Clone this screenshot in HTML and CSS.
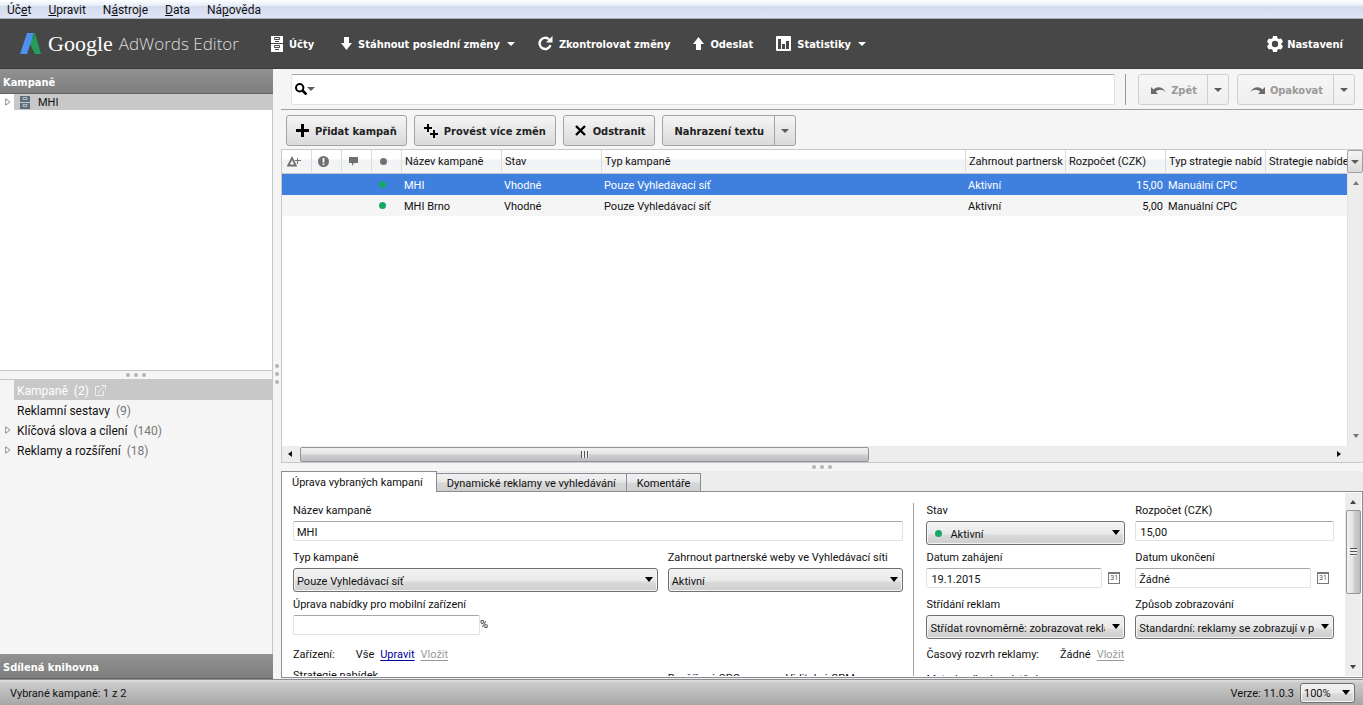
FILE: index.html
```html
<!DOCTYPE html>
<html lang="cs">
<head>
<meta charset="utf-8">
<title>Google AdWords Editor</title>
<link rel="stylesheet" href="styles.css">
</head>
<body>
<div class="app">
  <nav class="menubar">
    <button>Úč<u>e</u>t</button>
    <button><u>U</u>pravit</button>
    <button>N<u>á</u>stroje</button>
    <button><u>D</u>ata</button>
    <button>Ná<u>p</u>ověda</button>
  </nav>

  <header class="toolbar">
    <div class="brand">
      <svg class="brand-mark" width="22" height="22" viewBox="0 0 22 22"><path d="M9 2l6-2 6 21h-6L9 9z" fill="#259c5c"/><path d="M7 0h7L7 21H0z" fill="#4f8ff0"/><path d="M12.500 4.500L14 0l1 .5-1.500 7z" fill="#1f7f4c"/></svg>
      <span class="brand-google">Google</span>
      <span class="brand-product">AdWords Editor</span>
    </div>
    <button class="tool tool-accounts">
      <svg width="12" height="16" viewBox="0 0 12 16"><path fill="#fff" d="M0 0h12v7H0zM0 8h12v8H0z"/><path fill="none" stroke="#474747" d="M3.500 1.500h5v2h-5zM3.500 9.500h5v2h-5z"/><path fill="#474747" d="M4 5h4v1H4zM4 13h4v1H4z"/></svg>
      <span>Účty</span>
    </button>
    <button class="tool tool-download">
      <svg width="11" height="13" viewBox="0 0 11 13"><path fill="#fff" d="M3 0h5v6h3l-5.500 7L0 6h3z"/></svg>
      <span>Stáhnout poslední změny</span><i class="caret"></i>
    </button>
    <button class="tool tool-check">
      <svg width="15" height="15" viewBox="0 0 15 15"><path fill="none" stroke="#fff" stroke-width="2.400" d="M12.500 9.200A5.600 5.600 0 1 1 11 3.300"/><path fill="#fff" d="M14.500 0v6.500H8z"/></svg>
      <span>Zkontrolovat změny</span>
    </button>
    <button class="tool tool-send">
      <svg width="11" height="13" viewBox="0 0 11 13"><path fill="#fff" d="M3 13h5V7h3L5.500 0 0 7h3z"/></svg>
      <span>Odeslat</span>
    </button>
    <button class="tool tool-stats">
      <svg width="15" height="15" viewBox="0 0 15 15"><rect width="15" height="15" rx="1" fill="#fff"/><path fill="#474747" d="M2 3h3v10H2zM6 8h3v5H6zM10 5h3v8h-3z"/></svg>
      <span>Statistiky</span><i class="caret"></i>
    </button>
    <button class="tool tool-settings">
      <svg width="16" height="16" viewBox="0 0 16 16"><path fill="#fff" fill-rule="evenodd" d="M6 0h4l.5 2.300 1.300.8L14.200 2.400l1.800 3.300-1.600 1.500v1.600L16 10.300l-1.800 3.300-2.400-.7-1.300.8L10 16H6l-.5-2.300-1.300-.8-2.400.7L0 10.300l1.600-1.500V7.200L0 5.700l1.800-3.300 2.400.7 1.300-.8zM8 4.800a3.200 3.200 0 1 0 0 6.400 3.200 3.200 0 0 0 0-6.400z"/></svg>
      <span>Nastavení</span>
    </button>
  </header>

  <div class="workspace">
    <aside class="sidebar">
      <h2 class="side-title">Kampaně</h2>
      <div class="account-tree">
        <div class="tree-row">
          <svg class="twisty" width="6" height="8" viewBox="0 0 6 8"><path d="M.7.8L5 4 .7 7.200z" fill="#fff" stroke="#8c8c8c"/></svg>
          <div class="tree-item">
            <svg width="10" height="13" viewBox="0 0 10 13"><path fill="#5d6d7c" d="M0 0h10v6H0zM0 7h10v6H0z"/><path fill="none" stroke="#b4bdc6" d="M3 1.500h4v2H3zM3 8.500h4v2H3z"/></svg>
            <span>MHI</span>
          </div>
        </div>
      </div>
      <div class="splitter splitter-h"><i></i><i></i><i></i></div>
      <ul class="types">
        <li class="type is-active"><span class="twisty"></span><a>Kampaně <span class="count">(2)</span>
          <svg width="11" height="11" viewBox="0 0 11 11"><path fill="none" stroke="#eee" d="M5 1.500H.5v9h8V6M3 8l6.500-7M6.500.5h4v4"/></svg></a></li>
        <li class="type"><span class="twisty"></span><a>Reklamní sestavy <span class="count">(9)</span></a></li>
        <li class="type"><svg class="twisty" width="6" height="8" viewBox="0 0 6 8"><path d="M.7.8L5 4 .7 7.200z" fill="#fff" stroke="#8c8c8c"/></svg><a>Klíčová slova a cílení <span class="count">(140)</span></a></li>
        <li class="type"><svg class="twisty" width="6" height="8" viewBox="0 0 6 8"><path d="M.7.8L5 4 .7 7.200z" fill="#fff" stroke="#8c8c8c"/></svg><a>Reklamy a rozšíření <span class="count">(18)</span></a></li>
      </ul>
      <h2 class="side-title">Sdílená knihovna</h2>
    </aside>

    <div class="splitter splitter-v"><i></i><i></i><i></i></div>

    <main class="content">
      <div class="search-row">
        <div class="search">
          <button class="search-mode" aria-label="Možnosti hledání">
            <svg width="12" height="12" viewBox="0 0 12 12"><circle cx="4.700" cy="4.700" r="3.700" fill="none" stroke="#000" stroke-width="2"/><path d="M7.500 7.500l4 4" stroke="#000" stroke-width="2.600"/></svg>
            <i class="caret caret-grey"></i>
          </button>
          <input type="text" aria-label="Hledat">
        </div>
        <div class="history">
          <div class="split is-disabled">
            <button class="split-main"><svg width="15" height="8" viewBox="0 0 15 8"><path fill="#6a6a6a" d="M0 1v7h7L4.800 5.800C7.500 3.300 11 3 15 6.200 11.500 1 6.500-.2 2.500 3.500z"/></svg><span>Zpět</span></button><button class="split-arrow" aria-label="Historie zpět"><i class="caret caret-grey"></i></button>
          </div>
          <div class="split is-disabled">
            <button class="split-main"><svg width="15" height="8" viewBox="0 0 15 8"><path fill="#6a6a6a" d="M15 1v7H8l2.200-2.200C7.500 3.300 4 3 0 6.200 3.500 1 8.500-.2 12.500 3.500z"/></svg><span>Opakovat</span></button><button class="split-arrow" aria-label="Historie opakování"><i class="caret caret-grey"></i></button>
          </div>
        </div>
      </div>

      <div class="actions">
        <button class="btn"><svg width="13" height="13" viewBox="0 0 13 13"><path d="M6.500 0v13M0 6.500h13" stroke="#000" stroke-width="3"/></svg><span>Přidat kampaň</span></button>
        <button class="btn"><svg width="14" height="14" viewBox="0 0 14 14"><path d="M4 0v8M0 4h8M10 6v8M6 10h8" stroke="#000" stroke-width="2"/></svg><span>Provést více změn</span></button>
        <button class="btn btn-remove"><svg width="11" height="11" viewBox="0 0 11 11"><path d="M1 1l9 9M10 1l-9 9" stroke="#000" stroke-width="2.400"/></svg><span>Odstranit</span></button>
        <div class="split">
          <button class="split-main"><span>Nahrazení textu</span></button><button class="split-arrow" aria-label="Další náhrady"><i class="caret caret-grey"></i></button>
        </div>
      </div>

      <section class="grid-panel">
        <div class="grid-view">
          <table class="campaigns">
            <colgroup><col class="c-icon"><col class="c-icon"><col class="c-icon"><col class="c-icon"><col class="c-std"><col class="c-std"><col><col class="c-std"><col class="c-std"><col class="c-std"><col class="c-last"></colgroup>
            <thead>
              <tr>
                <th class="icon"><svg width="14" height="11" viewBox="0 0 14 11"><path fill="none" stroke="#707070" stroke-width="1.800" d="M1.200 9.500L5 2l3.800 7.500z"/><path stroke="#707070" d="M10.500 2v6M8 4.500h6"/></svg></th>
                <th class="icon"><svg width="11" height="11" viewBox="0 0 11 11"><circle cx="5.500" cy="5.500" r="5.500" fill="#707070"/><path stroke="#fff" stroke-width="1.800" d="M5.500 2v4.500M5.500 7.500v1.600"/></svg></th>
                <th class="icon"><svg width="9" height="9" viewBox="0 0 9 9"><path fill="#707070" d="M0 0h9v6H5L3 9V6H0z"/></svg></th>
                <th class="icon"><svg width="7" height="7" viewBox="0 0 7 7"><circle cx="3.500" cy="3.500" r="3.500" fill="#707070"/></svg></th>
                <th>Název kampaně</th><th>Stav</th><th>Typ kampaně</th><th>Zahrnout partnersk</th><th>Rozpočet (CZK)</th><th>Typ strategie nabíd</th><th>Strategie nabíde</th>
              </tr>
            </thead>
            <tbody>
              <tr class="is-selected"><td></td><td></td><td></td><td class="icon"><i class="dot"></i></td><td>MHI</td><td>Vhodné</td><td>Pouze Vyhledávací síť</td><td>Aktivní</td><td class="num">15,00</td><td>Manuální CPC</td><td></td></tr>
              <tr><td></td><td></td><td></td><td class="icon"><i class="dot"></i></td><td>MHI Brno</td><td>Vhodné</td><td>Pouze Vyhledávací síť</td><td>Aktivní</td><td class="num">5,00</td><td>Manuální CPC</td><td></td></tr>
            </tbody>
          </table>
        </div>
        <div class="grid-side">
          <button class="columns-btn" aria-label="Sloupce"><i class="caret caret-grey"></i></button>
          <div class="vscroll vscroll-idle"><i class="tri tri-up"></i><i class="tri tri-down"></i></div>
        </div>
        <div class="hscroll">
          <i class="tri tri-left"></i>
          <div class="h-track"><div class="h-thumb"><i class="grip"></i></div></div>
          <i class="tri tri-right"></i>
        </div>
      </section>

      <div class="splitter splitter-h"><i></i><i></i><i></i></div>

      <section class="editor">
        <div class="tabs" role="tablist">
          <button class="tab is-current" role="tab">Úprava vybraných kampaní</button>
          <button class="tab" role="tab">Dynamické reklamy ve vyhledávání</button>
          <button class="tab" role="tab">Komentáře</button>
        </div>
        <div class="pane">
          <form class="form">
            <div class="form-left">
              <div class="field span-2"><label for="name">Název kampaně</label><input id="name" type="text" value="MHI"></div>
              <div class="field"><label for="type">Typ kampaně</label><div class="select"><select id="type"><option>Pouze Vyhledávací síť</option></select></div></div>
              <div class="field"><label for="partners">Zahrnout partnerské weby ve Vyhledávací síti</label><div class="select"><select id="partners"><option>Aktivní</option></select></div></div>
              <div class="field"><label for="mobile">Úprava nabídky pro mobilní zařízení</label><div class="with-unit"><input id="mobile" type="text"><span>%</span></div></div>
              <div class="field"></div>
              <div class="inline span-2"><span class="inline-label">Zařízení:</span><span>Vše</span><a class="link" href="#">Upravit</a><a class="link link-off">Vložit</a></div>
              <div class="next-label">Strategie nabídek</div>
              <div class="next-pair"><span>Rozšířené CPC</span><span>Viditelné CPM</span></div>
            </div>
            <div class="form-right">
              <div class="field"><label for="state">Stav</label><div class="select select-dot"><select id="state"><option>Aktivní</option></select></div></div>
              <div class="field"><label for="budget">Rozpočet (CZK)</label><input id="budget" class="roomy" type="text" value="15,00"></div>
              <div class="field"><label for="start">Datum zahájení</label><div class="with-cal"><input id="start" class="roomy" type="text" value="19.1.2015"><button type="button" class="cal" aria-label="Kalendář">31</button></div></div>
              <div class="field"><label for="end">Datum ukončení</label><div class="with-cal"><input id="end" type="text" value="Žádné"><button type="button" class="cal" aria-label="Kalendář">31</button></div></div>
              <div class="field"><label for="rotation">Střídání reklam</label><div class="select"><select id="rotation"><option>Střídat rovnoměrně: zobrazovat reklamy rovnoměrněji</option></select></div></div>
              <div class="field"><label for="delivery">Způsob zobrazování</label><div class="select"><select id="delivery"><option>Standardní: reklamy se zobrazují v průběhu dne</option></select></div></div>
              <div class="inline span-2"><span class="inline-label">Časový rozvrh reklamy:</span><span>Žádné</span><a class="link link-off">Vložit</a></div>
              <div class="next-pair next-right span-2"><span>Metoda cílení umístění</span></div>
            </div>
          </form>
          <div class="vscroll vscroll-form"><i class="tri tri-up"></i><div class="v-thumb"><i class="grip"></i></div><i class="tri tri-down"></i></div>
        </div>
      </section>
    </main>
  </div>

  <footer class="status">
    <span class="status-text">Vybrané kampaně: 1 z 2</span>
    <label class="status-text version" for="zoom">Verze: 11.0.3</label>
    <div class="select select-zoom"><select id="zoom"><option>100%</option></select></div>
  </footer>
</div>
</body>
</html>
```
FILE: styles.css
```css
* { box-sizing: border-box; }
html, body { height: 100%; }
body { margin: 0; overflow: hidden; background: #f5f5f5; color: #111; font: 11px/14px Roboto, "Noto Sans", sans-serif; }
button, input, select { font: inherit; color: inherit; margin: 0; }
button { background: none; border: 0; padding: 0; white-space: nowrap; }
svg { display: block; flex: none; }
h2, ul { margin: 0; padding: 0; list-style: none; }

.app { display: flex; flex-direction: column; height: 100vh; }

/* menu */
.menubar { display: flex; gap: 17px; height: 19px; flex: none; padding: 1px 7px 0; font-size: 12px; border-bottom: 1px solid #a9adbb; background: linear-gradient(#fdfeff 0, #e6edf6 6px, #d4dbed 6px, #dfe5f6 18px); }
.menubar u { text-underline-offset: 1px; }

/* main toolbar */
.toolbar { display: flex; align-items: center; height: 50px; flex: none; padding: 0 20px; background: #474747; color: #fff; border-bottom: 1px solid #3c3c3c; font-family: "DejaVu Sans Condensed", "Noto Sans", sans-serif; font-weight: 700; }
.brand { display: flex; align-items: center; width: 251px; font-weight: 400; }
.brand-google { margin-left: 6px; font: 22px/30px "Liberation Serif", serif; }
.brand-product { margin-left: 6px; font: 300 17px/30px "Open Sans", sans-serif; color: #ddd; white-space: nowrap; }
.tool { display: flex; align-items: center; gap: 6px; margin-right: 23px; }
.tool span, .btn span, .split-main span { padding-top: 2px; }
.tool .caret { margin-left: 1px; }
.tool-accounts { margin-right: 27px; }
.tool-settings { margin: 0 0 0 auto; gap: 4px; }
.caret { border: 4px solid transparent; border-top-color: currentColor; border-bottom: 0; flex: none; }
.caret-grey { color: #5c5c5c; }

.workspace { display: flex; flex: 1; min-height: 0; }

/* sidebar */
.sidebar { display: flex; flex-direction: column; width: 273px; flex: none; border-right: 1px solid #c6c6c6; font-size: 12px; }
.side-title { height: 25px; flex: none; margin-right: -1px; padding: 6px 3px 0; color: #fff; font: 700 11px/15px "DejaVu Sans Condensed", "Noto Sans", sans-serif; background: linear-gradient(#929292, #7d7d7d); border-bottom: 1px solid #636363; }
.account-tree { height: 277px; flex: none; background: #fff; border-bottom: 1px solid #c6c6c6; }
.tree-row, .type { display: flex; align-items: center; }
.twisty { width: 6px; margin: 0 3px 0 5px; flex: none; }
.tree-item { display: flex; align-items: center; gap: 8px; flex: 1; height: 16px; padding-left: 6px; background: #c8c8c8; font-size: 11px; }
.tree-item span { padding-top: 2px; }
.types { flex: 1; border-top: 1px solid #c6c6c6; }
.type a { display: flex; align-items: center; gap: 6px; flex: 1; height: 20px; padding: 1px 0 0 3px; }
.count { color: #777; }
.is-active a { background: #c8c8c8; color: #fff; }
.is-active .count { color: #fff; }

.splitter { display: flex; align-items: center; justify-content: center; gap: 4px; flex: none; }
.splitter i { width: 4px; height: 4px; border-radius: 2px; background: #b4b4b4; }
.splitter-h { height: 8px; }
.splitter-v { flex-direction: column; width: 8px; }

/* content */
.content { display: flex; flex-direction: column; flex: 1; min-width: 0; }
.search-row { display: flex; height: 41px; flex: none; padding: 5px 8px 4px 10px; border-bottom: 1px solid #a0a0a0; }
.search { display: flex; flex: 1; background: #fff; border: 1px solid #dfe2e6; border-top-color: #a4a7ab; border-radius: 2px; }
.search-mode { display: flex; align-items: center; padding: 0 3px 2px; }
.search input { flex: 1; border: 0; outline: 0; background: none; }
.history { display: flex; gap: 8px; margin-left: 10px; padding-left: 12px; border-left: 1px solid #9a9a9a; }

.btn, .split { display: flex; align-items: center; height: 31px; border: 1px solid #a3a3a3; border-radius: 3px; background: linear-gradient(#f5f5f5, #dadada); color: #222; font-family: "DejaVu Sans Condensed", "Noto Sans", sans-serif; font-weight: 700; }
.btn { gap: 6px; padding: 0 9px; }
.btn-remove { gap: 7px; padding: 0 8px 0 11px; }
.split-main { display: flex; align-items: center; gap: 5px; height: 100%; padding: 0 10px 0 12px; font-weight: 700; }
.split-arrow { display: flex; align-items: center; justify-content: center; width: 21px; height: 100%; border-left: 1px solid #a3a3a3; }
.is-disabled { background: linear-gradient(#f6f6f6, #efefef); border-color: #cfcfcf; color: #999; }
.is-disabled .split-arrow { border-color: #cfcfcf; }
.actions { display: flex; gap: 7px; height: 39px; flex: none; padding: 5px 5px 3px; }

/* campaign table */
.grid-panel { display: grid; grid-template: 1fr 16px / 1fr 16px; flex: 1; min-height: 0; background: #fff; border: 1px solid #c8c8c8; border-width: 1px 0 1px 1px; }
.grid-view { overflow: hidden; }
.campaigns { width: 100%; table-layout: fixed; border-collapse: separate; border-spacing: 0; }
.c-icon { width: 30px; }
.c-std { width: 100px; }
.c-last { width: 81px; }
.campaigns th { height: 24px; padding: 0 0 0 3px; font-weight: 400; text-align: left; white-space: nowrap; overflow: hidden; border-right: 1px solid #dcdcdc; border-bottom: 1px solid #c6c6c6; background: linear-gradient(#fff 9px, #f1f2f4 10px, #f4f5f7); }
.campaigns th:last-child { border-right: 0; }
.campaigns td { height: 21px; padding: 2px 3px 0 2px; white-space: nowrap; overflow: hidden; background: #f5f5f5; }
.campaigns th.icon { padding: 0 6px 0 0; }
.campaigns td.icon { padding: 0 9px 0 0; }
.campaigns .icon svg, .dot { margin: 0 auto; }
.campaigns .num { text-align: right; }
.campaigns .is-selected td { background: #3f80df; color: #fff; }
.dot { display: block; width: 7px; height: 7px; border-radius: 50%; background: #16a765; }

.grid-side { display: flex; flex-direction: column; background: #efefef; }
.columns-btn { display: flex; align-items: center; justify-content: center; height: 23px; border: 1px solid #a0a0a0; border-radius: 2px; background: linear-gradient(#f5f5f5, #dadada); }
.vscroll { display: flex; flex-direction: column; align-items: center; background: #ededed; }
.vscroll-idle { flex: 1; justify-content: space-between; padding: 8px 0; border-left: 1px solid #e2e2e2; color: #777; }
.tri { border: 3px solid transparent; flex: none; }
.tri-up { border-top: 0; border-bottom: 4px solid; }
.tri-down { border-bottom: 0; border-top: 4px solid; }
.tri-left { border-left: 0; border-right: 4px solid; }
.tri-right { border-right: 0; border-left: 4px solid; }
.hscroll { grid-column: 1 / 3; display: flex; align-items: center; gap: 8px; padding: 0 22px 0 6px; background: #ededed; }
.h-track { display: grid; grid-template-columns: 57fr 46fr; flex: 1; }
.h-thumb { display: flex; align-items: center; justify-content: center; height: 15px; border: 1px solid #929599; border-radius: 2px; background: linear-gradient(#f2f2f2 0, #e4e4e4 6px, #cfcfcf 7px, #bcbdc0); }
.grip { width: 8px; height: 7px; background: repeating-linear-gradient(90deg, #555 0 1px, #eee 1px 3px); }

/* editor */
.editor { display: flex; flex-direction: column; height: 208px; flex: none; background: #ededed; }
.tabs { display: flex; align-items: flex-end; height: 20px; flex: none; z-index: 1; }
.tab { height: 18px; padding: 2px 10px 0 10px; border: 1px solid #8b8d96; border-left-width: 0; border-bottom: 0; background: linear-gradient(#f2f2f2 0, #e8e8e8 8px, #d8d8d8 9px, #cfcfcf); }
.tab.is-current { height: 21px; margin-bottom: -1px; padding: 2px 13px 0 10px; border-left-width: 1px; background: #fff; }
.pane { display: flex; flex: 1; min-height: 0; margin-bottom: 1px; border: 1px solid #8b8d96; background: #fff; }
.form { display: flex; flex: 1; min-width: 0; padding: 11px 10px 0 11px; margin-bottom: 1px; overflow: hidden; }
.form-left, .form-right { display: grid; grid-template-rows: 47px 47px 47px 24px 14px; column-gap: 10px; min-width: 0; }
.form-left { flex: 611; grid-template-columns: 365fr 236fr; padding-right: 10px; }
.form-right { flex: 408; grid-template-columns: 1fr 1fr; border-left: 1px solid #a0a0a0; padding-left: 12px; }
.span-2 { grid-column: span 2; }
.field { min-width: 0; }
.field label { display: block; margin-bottom: 2px; line-height: 16px; }
.field input { width: 100%; height: 20px; padding: 2px 3px 0; border: 1px solid #dfe2e6; border-top-color: #a4a7ab; border-radius: 2px; background: #fff; outline: 0; }
.field .roomy { padding-left: 4px; }
.select { position: relative; }
.select select { display: block; width: 100%; height: 24px; padding: 3px 19px 0 3px; appearance: none; border: 1px solid #707070; border-radius: 3px; background: linear-gradient(#f3f3f3 0, #e9e9e9 12px, #dadada 13px, #cecece); outline: 0; overflow: hidden; text-overflow: clip; box-shadow: inset 0 0 0 1px #f4f4f4; }
.select::after { content: ""; position: absolute; right: 5px; top: 9px; border: 4px solid transparent; border-top: 5px solid #000; border-bottom: 0; pointer-events: none; }
.select-dot select { padding-left: 23px; }
.select-dot::before { content: ""; position: absolute; left: 9px; top: 9px; width: 7px; height: 7px; border-radius: 50%; background: #16a765; }
.with-unit { display: flex; align-items: center; width: 195px; }
.with-cal { display: flex; align-items: center; gap: 6px; padding-right: 5px; }
.with-cal input { flex: 1; min-width: 0; }
.cal { width: 12px; height: 12px; flex: none; border: 1px solid #777; border-top-width: 2px; color: #555; font-size: 7px; line-height: 9px; }
.inline { display: flex; gap: 6px; align-items: center; height: 22px; }
.inline-label { margin-right: 15px; }
.link { color: #0000a8; }
.link, .link-off { text-decoration: underline; text-underline-offset: 2px; }
.link-off { color: #999; }
.next-label { height: 14px; padding-top: 1px; }
.next-pair { display: flex; gap: 46px; padding-top: 4px; white-space: nowrap; }
.next-right { padding-top: 5px; }
.vscroll-form { width: 16px; flex: none; padding: 7px 0; margin: 1px; gap: 6px; color: #444; }
.v-thumb { display: flex; align-items: center; justify-content: center; width: 15px; height: 84px; border: 1px solid #929599; border-radius: 2px; background: linear-gradient(90deg, #f2f2f2 0, #e4e4e4 6px, #cfcfcf 7px, #bcbdc0); }
.v-thumb .grip { width: 7px; height: 8px; background: repeating-linear-gradient(#555 0 1px, #eee 1px 3px); }
.vscroll-form .tri-down { margin-top: auto; }

/* status bar */
.status { display: flex; align-items: center; height: 26px; flex: none; padding: 1px 8px 0 10px; border-top: 1px solid #8f8f8f; background: linear-gradient(#e0e0e0 0, #cbcbcb 3px, #a6a6a6); }
.status-text { padding-top: 2px; }
.version { margin-left: auto; margin-right: 6px; }
.select-zoom { width: 55px; }
.select-zoom select { height: 20px; padding-top: 2px; background: linear-gradient(#f3f3f3 0, #e9e9e9 9px, #dadada 10px, #cecece); }
.select-zoom::after { top: 7px; }
```
